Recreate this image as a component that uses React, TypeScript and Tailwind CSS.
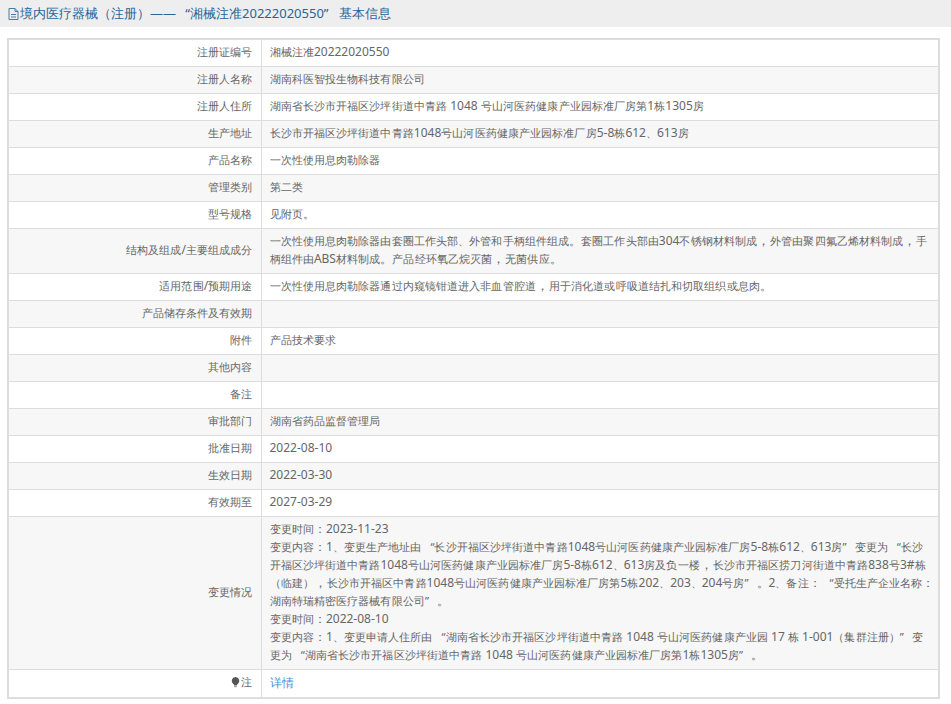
const rows: [string, string][] = [
  ["注册证编号", "湘械注准20222020550"],
  ["注册人名称", "湖南科医智投生物科技有限公司"],
  ["注册人住所", "湖南省长沙市开福区沙坪街道中青路 1048 号山河医药健康产业园标准厂房第1栋1305房"],
  ["生产地址", "长沙市开福区沙坪街道中青路1048号山河医药健康产业园标准厂房5-8栋612、613房"],
  ["产品名称", "一次性使用息肉勒除器"],
  ["管理类别", "第二类"],
  ["型号规格", "见附页。"],
  ["结构及组成/主要组成成分", "一次性使用息肉勒除器由套圈工作头部、外管和手柄组件组成。套圈工作头部由304不锈钢材料制成，外管由聚四氟乙烯材料制成，手\n柄组件由ABS材料制成。产品经环氧乙烷灭菌，无菌供应。"],
  ["适用范围/预期用途", "一次性使用息肉勒除器通过内窥镜钳道进入非血管腔道，用于消化道或呼吸道结扎和切取组织或息肉。"],
  ["产品储存条件及有效期", ""],
  ["附件", "产品技术要求"],
  ["其他内容", ""],
  ["备注", ""],
  ["审批部门", "湖南省药品监督管理局"],
  ["批准日期", "2022-08-10"],
  ["生效日期", "2022-03-30"],
  ["有效期至", "2027-03-29"],
  ["变更情况", "变更时间：2023-11-23\n变更内容：1、变更生产地址由“长沙开福区沙坪街道中青路1048号山河医药健康产业园标准厂房5-8栋612、613房”变更为“长沙\n开福区沙坪街道中青路1048号山河医药健康产业园标准厂房5-8栋612、613房及负一楼，长沙市开福区捞刀河街道中青路838号3#栋\n（临建），长沙市开福区中青路1048号山河医药健康产业园标准厂房第5栋202、203、204号房”。2、备注：“受托生产企业名称：\n湖南特瑞精密医疗器械有限公司”。\n变更时间：2022-08-10\n变更内容：1、变更申请人住所由“湖南省长沙市开福区沙坪街道中青路 1048 号山河医药健康产业园 17 栋 1-001（集群注册）”变\n更为“湖南省长沙市开福区沙坪街道中青路 1048 号山河医药健康产业园标准厂房第1栋1305房”。"],
];

// Latin runs and centred punctuation are set slightly larger than the CJK text in the reference.
function Txt({ s, title }: { s: string; title?: boolean }) {
  const parts = s.split(/([\x20-\x7e]+|[：，（）。、“”—])/).filter(Boolean);
  return (
    <>
      {parts.map((p, i) => {
        if (/^[\x20-\x7e]+$/.test(p))
          return <span key={i} className={title ? "text-[13px] leading-[0]" : "text-[12px] leading-[0] tracking-normal"}>{p}</span>;
        if (p === "“") return <span key={i} className={title ? "inline-block w-[14px] text-right leading-[0] font-['Noto_Sans_CJK_SC']" : "inline-block w-[13px] text-right leading-[0] tracking-normal font-['Noto_Sans_CJK_SC']"}>{p}</span>;
        if (p === "”") return <span key={i} className={title ? "inline-block w-[15px] text-left leading-[0] font-['Noto_Sans_CJK_SC']" : "inline-block w-[12px] text-left leading-[0] tracking-normal font-['Noto_Sans_CJK_SC']"}>{p}</span>;
        if (p === "，") return <span key={i} className="text-[13px] leading-[0] tracking-normal font-['Noto_Sans_CJK_TC']">{p}</span>;
        if (p === "（" || p === "）")
          return <span key={i} className={title ? "text-[13px] leading-[0] font-['Noto_Sans_CJK_TC']" : "text-[11px] leading-[0] tracking-normal font-['Noto_Sans_CJK_TC']"}>{p}</span>;
        if (p === "。" || p === "：")
          return <span key={i} className="text-[12px] leading-[0] tracking-normal font-['Noto_Sans_CJK_TC']">{p}</span>;
        if (p === "、") return <span key={i} className="text-[11px] leading-[0] tracking-normal font-['Noto_Sans_CJK_SC']">{p}</span>;
        if (p === "—") return <span key={i} className="leading-[0] font-['Noto_Sans_CJK_SC']">{p}</span>;
        return <span key={i}>{p}</span>;
      })}
    </>
  );
}

export default function App() {
  return (
    <div className="w-[951px] h-[704px] bg-white overflow-hidden font-['Liberation_Sans','Noto_Sans_CJK_SC',sans-serif]">
      <div className="h-[27px] bg-[#eeeeee] pl-[7px] flex items-center text-[13px] text-[#2a6496]">
        <svg width="13" height="14" viewBox="0 0 13 14" fill="none" stroke="#4a7ba6" strokeWidth="1">
          <path d="M2 1.5h6l3 3v8H2z" />
          <path d="M8 1.5v3h3M4 7.5h5M4 10h5" />
        </svg>
        <span><Txt s="境内医疗器械（注册）——“湘械注准20222020550”基本信息" title /></span>
      </div>
      <table className="ml-[7px] mt-[11px] w-[933px] border-collapse border-2 border-[#dddddd] text-[11.2px] tracking-[0.1px] text-[#666666] table-fixed">
        <colgroup>
          <col className="w-[253px]" />
          <col />
        </colgroup>
        <tbody>
          {rows.map(([k, v], i) => (
            <tr key={i} className={i % 2 === 1 ? "bg-[#f7f7f7]" : "bg-white"}>
              <td className="border border-[#dddddd] text-right pr-[8px] h-[27px] pt-0 pb-[2px] align-middle">
                <Txt s={k} />
              </td>
              <td className="border border-[#dddddd] pl-[8px] pr-[6px] align-middle leading-[18px] pt-[3px] pb-[5px]">
                {v.split("\n").map((line, j) => (
                  <div key={j} className="whitespace-nowrap"><Txt s={line} /></div>
                ))}
              </td>
            </tr>
          ))}
          <tr className="bg-white">
            <td className="border border-[#dddddd] text-right pr-[8px] h-[28px] py-0 align-middle">
              <span className="inline-flex items-center justify-end">
                <svg width="11" height="12" viewBox="0 0 11 12">
                  <path d="M5.5 1a3.8 3.8 0 0 0-2.2 6.9c.6.5.9 1 .9 1.6h2.6c0-.6.3-1.1.9-1.6A3.8 3.8 0 0 0 5.5 1z" fill="#555555" />
                  <rect x="4.2" y="10" width="2.6" height="1.2" fill="#999999" />
                </svg>
                注
              </span>
            </td>
            <td className="border border-[#dddddd] pl-[8px] align-middle text-[12px] text-[#4a90d9]">详情</td>
          </tr>
        </tbody>
      </table>
    </div>
  );
}
